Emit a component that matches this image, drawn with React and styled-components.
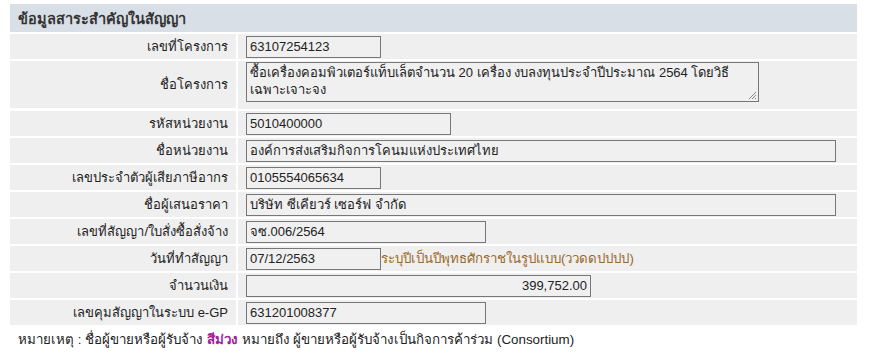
import React from 'react';
import styled, { createGlobalStyle } from 'styled-components';

const GlobalStyle = createGlobalStyle`
  body {
    margin: 0;
    background: #ffffff;
    font-family: Tahoma, "Liberation Sans", "Noto Sans", sans-serif;
    font-size: 13px;
    color: #222;
  }
`;

const Page = styled.div`
  padding: 4px 13px 0 10px;
`;

const Panel = styled.div`
  display: grid;
  grid-template-columns: 226px 1fr;
  gap: 2px;
  width: 847px;
`;

const Header = styled.div`
  grid-column: 1 / -1;
  height: 28px;
  display: flex;
  align-items: center;
  padding-left: 8px;
  background: #d9dfe6;
  font-size: 14.5px;
  font-weight: bold;
  color: #333;
`;

const Label = styled.div`
  height: ${(p) => p.$h || 25}px;
  display: flex;
  align-items: center;
  justify-content: flex-end;
  padding-right: 8px;
  background: #efefef;
  color: #222;
`;

const Value = styled.div`
  height: ${(p) => p.$h || 25}px;
  display: flex;
  align-items: ${(p) => (p.$top ? 'flex-start' : 'center')};
  padding: ${(p) => (p.$top ? '1px 0 0 8px' : '0 0 0 8px')};
  background: #efefef;
`;

const Field = styled.div`
  box-sizing: border-box;
  width: ${(p) => p.$w}px;
  height: 22px;
  display: flex;
  align-items: center;
  justify-content: ${(p) => (p.$right ? 'flex-end' : 'flex-start')};
  padding: 0 3px;
  border: 1px solid #777;
  background: #f0f0f0;
  color: #222;
  white-space: nowrap;
  overflow: hidden;
`;

const Area = styled.div`
  position: relative;
  box-sizing: border-box;
  width: 513px;
  height: 40px;
  padding: 1px 3px;
  border: 1px solid #777;
  background: #f0f0f0;
  color: #222;
  line-height: 17px;
`;

const Grip = styled.svg`
  position: absolute;
  right: 1px;
  bottom: 1px;
`;

const Hint = styled.span`
  color: #9a6a2a;
  font-size: 13.3px;
  white-space: nowrap;
`;

const Note = styled.p`
  margin: 4px 0 0 8px;
  font-size: 13.35px;
  color: #222;
`;

const Purple = styled.span`
  color: #a0209c;
  font-weight: bold;
`;

const rows = [
  { label: 'เลขที่โครงการ', value: '63107254123', w: 135 },
  { label: 'ชื่อโครงการ', area: true },
  { label: 'รหัสหน่วยงาน', value: '5010400000', w: 205 },
  { label: 'ชื่อหน่วยงาน', value: 'องค์การส่งเสริมกิจการโคนมแห่งประเทศไทย', w: 590 },
  { label: 'เลขประจำตัวผู้เสียภาษีอากร', value: '0105554065634', w: 135 },
  { label: 'ชื่อผู้เสนอราคา', value: 'บริษัท ซีเคียวร์ เซอร์ฟ จำกัด', w: 590 },
  { label: 'เลขที่สัญญา/ใบสั่งซื้อสั่งจ้าง', value: 'จซ.006/2564', w: 240 },
  {
    label: 'วันที่ทำสัญญา',
    value: '07/12/2563',
    w: 135,
    hint: 'ระบุปีเป็นปีพุทธศักราชในรูปแบบ(ววดดปปปป)',
  },
  { label: 'จำนวนเงิน', value: '399,752.00', w: 345, right: true },
  { label: 'เลขคุมสัญญาในระบบ e-GP', value: '631201008377', w: 240 },
];

export default function App() {
  return (
    <Page>
      <GlobalStyle />
      <Panel>
        <Header>ข้อมูลสาระสำคัญในสัญญา</Header>
        {rows.map((r) =>
          r.area ? (
            <React.Fragment key={r.label}>
              <Label $h={47}>{r.label}</Label>
              <Value $h={47} $top>
                <Area>
                  ซื้อเครื่องคอมพิวเตอร์แท็บเล็ตจำนวน 20 เครื่อง งบลงทุนประจำปีประมาณ 2564 โดยวิธีเฉพาะเจาะจง
                  <Grip width="10" height="10" viewBox="0 0 10 10">
                    <path d="M9 2 L2 9 M9 5 L5 9 M9 8 L8 9" stroke="#888" strokeWidth="1" />
                  </Grip>
                </Area>
              </Value>
            </React.Fragment>
          ) : (
            <React.Fragment key={r.label}>
              <Label>{r.label}</Label>
              <Value>
                <Field $w={r.w} $right={r.right}>
                  {r.value}
                </Field>
                {r.hint && <Hint>{r.hint}</Hint>}
              </Value>
            </React.Fragment>
          )
        )}
      </Panel>
      <Note>
        หมายเหตุ : ชื่อผู้ขายหรือผู้รับจ้าง <Purple>สีม่วง</Purple> หมายถึง ผู้ขายหรือผู้รับจ้างเป็นกิจการค้าร่วม (Consortium)
      </Note>
    </Page>
  );
}
